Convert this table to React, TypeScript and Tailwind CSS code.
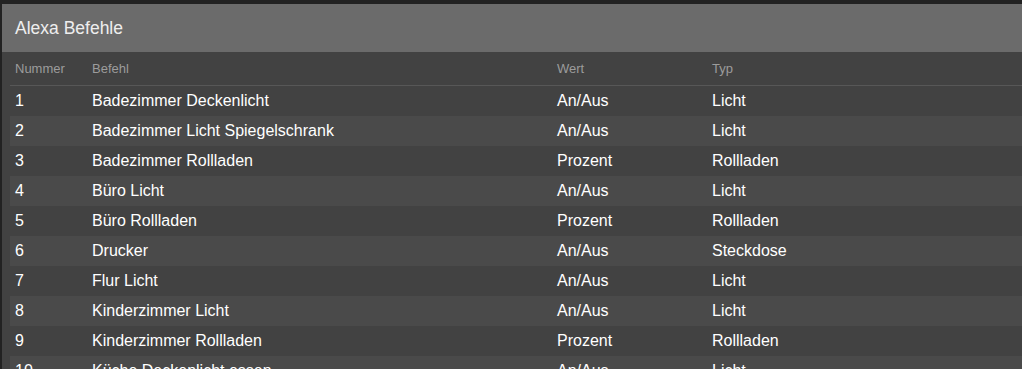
const rows: [string, string, string, string][] = [
  ["1", "Badezimmer Deckenlicht", "An/Aus", "Licht"],
  ["2", "Badezimmer Licht Spiegelschrank", "An/Aus", "Licht"],
  ["3", "Badezimmer Rollladen", "Prozent", "Rollladen"],
  ["4", "Büro Licht", "An/Aus", "Licht"],
  ["5", "Büro Rollladen", "Prozent", "Rollladen"],
  ["6", "Drucker", "An/Aus", "Steckdose"],
  ["7", "Flur Licht", "An/Aus", "Licht"],
  ["8", "Kinderzimmer Licht", "An/Aus", "Licht"],
  ["9", "Kinderzimmer Rollladen", "Prozent", "Rollladen"],
  ["10", "Küche Deckenlicht essen", "An/Aus", "Licht"],
];

export default function App() {
  return (
    <div
      className="h-[369px] w-[1022px] overflow-hidden bg-[#222222] pt-[4px] pl-[2px]"
      style={{ fontFamily: '"Liberation Sans", Arial, sans-serif' }}
    >
      <div className="h-full bg-[#424242]">
        {/* Panel header */}
        <div className="flex h-[48px] items-center bg-[#6b6b6b] px-[13px] text-[17.5px] text-[#eeeeee]">
          Alexa Befehle
        </div>

        <div className="pl-[8px]">
          <div className="grid h-[34px] grid-cols-[77px_465px_155px_1fr] items-end border-b border-[#575757] pb-[7px] text-[13px] text-[#9c9c9c]">
            <div className="px-[5px]">Nummer</div>
            <div className="px-[5px]">Befehl</div>
            <div className="px-[5px]">Wert</div>
            <div className="px-[5px]">Typ</div>
          </div>

          {rows.map((r, i) => (
            <div
              key={r[0]}
              className={`grid h-[30px] grid-cols-[77px_465px_155px_1fr] items-center text-[16px] text-white ${
                i % 2 === 1 ? "bg-[#4a4a4a]" : "bg-[#424242]"
              }`}
            >
              <div className="px-[5px]">{r[0]}</div>
              <div className="px-[5px]">{r[1]}</div>
              <div className="px-[5px]">{r[2]}</div>
              <div className="px-[5px]">{r[3]}</div>
            </div>
          ))}
        </div>
      </div>
    </div>
  );
}
